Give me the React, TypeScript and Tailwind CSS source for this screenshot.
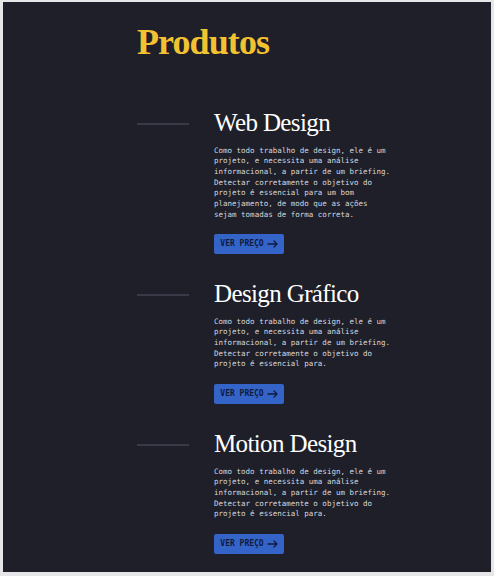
const products = [
  {
    title: "Web Design",
    text: "Como todo trabalho de design, ele é um projeto, e necessita uma análise informacional, a partir de um briefing. Detectar corretamente o objetivo do projeto é essencial para um bom planejamento, de modo que as ações sejam tomadas de forma correta.",
  },
  {
    title: "Design Gráfico",
    text: "Como todo trabalho de design, ele é um projeto, e necessita uma análise informacional, a partir de um briefing. Detectar corretamente o objetivo do projeto é essencial para.",
  },
  {
    title: "Motion Design",
    text: "Como todo trabalho de design, ele é um projeto, e necessita uma análise informacional, a partir de um briefing. Detectar corretamente o objetivo do projeto é essencial para.",
  },
];

const Arrow = () => (
  <svg width="11" height="8" viewBox="0 0 11 8" fill="none" stroke="currentColor" strokeWidth="1.3" strokeLinecap="round" strokeLinejoin="round">
    <path d="M1 4h9M7 1l3 3-3 3" />
  </svg>
);

export default function App() {
  return (
    <div className="w-[494px] h-[576px] bg-[#e6e6e8] pt-[2px] pl-[3px] pr-[3px] pb-[4px]">
      <div className="h-full bg-[#1e1f29] pl-[134px] pt-[22px]">
        <h1
          className="text-[36px] leading-[36px] font-bold tracking-tight text-[#f2c230]"
          style={{ fontFamily: '"Liberation Serif", serif' }}
        >
          Produtos
        </h1>
        <div className="mt-[48px] flex flex-col gap-[25px]">
          {products.map((p) => (
            <div key={p.title} className="flex items-start">
              <div className="mt-[15px] h-[2px] w-[52px] bg-[#393a47]" />
              <div className="ml-[25px] w-[178px]">
                <h2
                  className="text-[25px] leading-[30px] tracking-tight text-white"
                  style={{ fontFamily: '"Liberation Serif", serif' }}
                >
                  {p.title}
                </h2>
                <p
                  className="mt-[7.5px] text-[7.5px] leading-[10.67px] text-[#d8d8de]"
                  style={{ fontFamily: '"DejaVu Sans Mono", monospace' }}
                >
                  {p.text}
                </p>
                <button
                  className="mt-[14px] flex h-[20px] w-[70px] items-center justify-center gap-[3px] rounded-[2px] bg-[#3564c8] text-[8px] font-bold text-[#101a3c]"
                  style={{ fontFamily: '"DejaVu Sans Mono", monospace' }}
                >
                  VER PREÇO <Arrow />
                </button>
              </div>
            </div>
          ))}
        </div>
      </div>
    </div>
  );
}
